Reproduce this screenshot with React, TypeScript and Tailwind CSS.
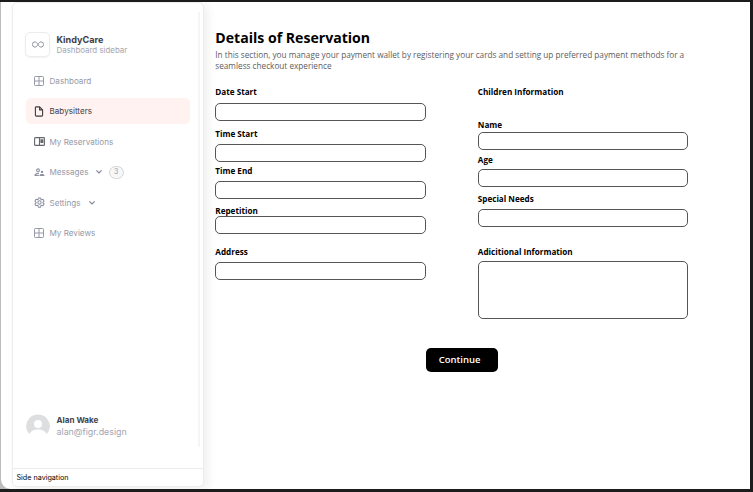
import type { ReactNode } from "react";

function Grid() {
  return (
    <svg className="h-[10px] w-[10px]" viewBox="0 0 10 10" fill="none" stroke="#9699a8" strokeWidth="1">
      <rect x="0.5" y="0.5" width="9" height="9" rx="0.8" />
      <path d="M5 .5v9M.5 5h9" />
    </svg>
  );
}

function FileIcon() {
  return (
    <svg className="h-[11px] w-[10px]" viewBox="0 0 10 11" fill="none" stroke="#3f3b3d" strokeWidth="1.1" strokeLinejoin="round">
      <path d="M2 .9h3.600L8.600 3.900v5.200a1 1 0 0 1-1 1H2.400a1 1 0 0 1-1-1V1.500q0-.6.6-.6Z" />
      <path d="M5.600 1v2.900h2.900" />
    </svg>
  );
}

function Reader() {
  return (
    <svg className="h-[9px] w-[11px]" viewBox="0 0 11 9" fill="none" stroke="#66676c" strokeWidth="1.1">
      <rect x="0.600" y="0.600" width="9.800" height="7.800" rx="0.700" />
      <path d="M5.500.600v7.800" />
      <path d="M6.400 2.300h3v3.600h-3z" fill="#66676c" stroke="none" />
    </svg>
  );
}

function People() {
  return (
    <svg className="h-[9px] w-[11px]" viewBox="0 0 11 9" fill="none" stroke="#8b8f9e" strokeWidth="1.100">
      <circle cx="4" cy="2.300" r="1.400" />
      <path d="M5 5.400C2.600 5 1 5.900 1 7.400h3.800" />
      <circle cx="8" cy="3.900" r="1.200" fill="#8b8f9e" stroke="none" />
      <path d="M5.400 8c0-1.500 1-2.100 2.600-2.100s2.600.6 2.600 2.100Z" fill="#8b8f9e" stroke="none" />
    </svg>
  );
}

function Gear() {
  return (
    <svg className="h-[11px] w-[11px]" viewBox="0 0 24 24" fill="none" stroke="#8b8f9e" strokeWidth="2.200" strokeLinejoin="round">
      <path d="M9.700 2h4.600l.6 3 1.900 1.100 2.900-1 2.300 4-2.300 2v2l2.300 2-2.300 4-2.900-1-1.900 1.100-.6 3H9.700l-.6-3-1.900-1.100-2.900 1-2.300-4 2.300-2v-2L2 9.100l2.300-4 2.900 1L9.100 5Z" />
      <circle cx="12" cy="12" r="3.600" />
    </svg>
  );
}

function Chevron() {
  return (
    <svg className="h-[4px] w-[6px]" viewBox="0 0 6 4" fill="none" stroke="#858998" strokeWidth="1.100" strokeLinecap="round" strokeLinejoin="round">
      <path d="M.700.700 3 3 5.300.700" />
    </svg>
  );
}

function NavItem({ icon, label, active, children }: { icon: ReactNode; label: string; active?: boolean; children?: ReactNode }) {
  return (
    <div className={`flex h-[26px] items-center rounded-[5px] pl-[7px] ${active ? "bg-[#fff2f0] text-[#454146]" : "text-[#9699a6]"}`}>
      <span className="flex w-[12px] justify-center">{icon}</span>
      <span className="ml-[4.500px] text-[8.100px] leading-[12px]">{label}</span>
      {children}
    </div>
  );
}

function Field({ label, className, box }: { label: string; className: string; box: string }) {
  return (
    <label className={`block ${className}`}>
      <span className="block h-[12px] text-[8.150px] leading-[12px] font-bold text-black">{label}</span>
      <span className={`block w-full rounded-[5px] border border-[#555] bg-white ${box}`} />
    </label>
  );
}

export default function App() {
  return (
    <div className="flex h-[492px] w-[753px] overflow-hidden border-t-2 border-r-[3px] border-b-[3px] border-[#1c1c1c] bg-[#bcbcbc] font-['Open_Sans','Noto_Sans',sans-serif]">
      <div className="flex h-[487px] w-full overflow-hidden rounded-bl-[10px] border-l border-[#bcbcbc] bg-white">
        <aside className="ml-[11px] flex h-[484.500px] w-[192px] shrink-0 flex-col rounded-[5px] border border-[#ececee] bg-white font-['Inter',sans-serif] shadow-[4px_3px_10px_rgba(70,60,40,0.08)]">
          <div className="mt-[9px] mr-[3px] flex h-[435px] flex-col border-r-2 border-[#f5f5f5] pt-[20px] pl-[13px]">
            <div className="flex items-center">
              <div className="-ml-px flex h-[25px] w-[25px] items-center justify-center rounded-[5px] border border-[#ececee] bg-white shadow-xs">
                <svg className="h-[7px] w-[12px]" viewBox="0 0 12 7" fill="none" stroke="#858895" strokeWidth="0.900">
                  <path d="M6 3.500C5 1.700 4.300.900 3 .900a2.600 2.600 0 0 0 0 5.200c1.300 0 2-.8 3-2.600s1.700-2.600 3-2.600a2.600 2.600 0 0 1 0 5.200c-1.300 0-2-.8-3-2.600Z" />
                </svg>
              </div>
              <div className="ml-[6.500px]">
                <div className="text-[9.100px] leading-[11px] font-bold text-[#3b3e4b]">KindyCare</div>
                <div className="text-[7.900px] leading-[10px] text-[#a3a6b2]">Dashboard sidebar</div>
              </div>
            </div>
            <nav className="mt-[11px] mr-[8px] flex flex-col gap-[4.400px]">
              <NavItem icon={<Grid />} label="Dashboard" />
              <NavItem icon={<FileIcon />} label="Babysitters" active />
              <NavItem icon={<Reader />} label="My Reservations" />
              <NavItem icon={<People />} label="Messages">
                <span className="ml-[7px]"><Chevron /></span>
                <span className="ml-[7px] flex h-[13px] w-[15px] items-center justify-center rounded-full border border-[#d4d5da] bg-[#f7f7f8] text-[7px]">3</span>
              </NavItem>
              <NavItem icon={<Gear />} label="Settings">
                <span className="ml-[8px]"><Chevron /></span>
              </NavItem>
              <NavItem icon={<Grid />} label="My Reviews" />
            </nav>
            <div className="mt-auto mb-[9.500px] flex items-center">
              <svg className="h-[24px] w-[24px]" viewBox="0 0 24 24">
                <path d="M12 .5A11.700 11.700 0 0 0 3.200 20C5 16.800 8 15.500 12 15.500s7 1.300 8.800 4.500A11.700 11.700 0 0 0 12 .5Z" fill="#dddee0" />
                <circle cx="12" cy="10" r="4" fill="white" />
              </svg>
              <div className="ml-[6.500px]">
                <div className="text-[8.100px] leading-[11px] font-bold text-[#42444e]">Alan Wake</div>
                <div className="text-[8.900px] leading-[11px] text-[#a3a6b2]">alan@figr.design</div>
              </div>
            </div>
          </div>
          <div className="mt-auto h-[18px] border-t border-[#ececee] pl-[3.500px] text-[7.200px] leading-[17px] text-black">Side navigation</div>
        </aside>
        <main className="ml-[11.300px] w-[480px] pt-[27px]">
          <h1 className="h-[18px] text-[14.100px] leading-[18px] font-bold text-black">Details of Reservation</h1>
          <p className="mt-[2px] h-[23px] text-[8.210px] leading-[11px] whitespace-nowrap text-[#5c5c5c]">
            In this section, you manage your payment wallet by registering your cards and setting up preferred payment methods for a
            <br />
            seamless checkout experience
          </p>
          <form className="mt-[14px] flex gap-[52px]">
            <div className="w-[210.500px]">
              <Field label="Date Start" className="" box="mt-[5px] h-[18px]" />
              <Field label="Time Start" className="mt-[7px]" box="mt-[3.500px] h-[18px]" />
              <Field label="Time End" className="mt-[3.500px]" box="mt-[4px] h-[18px]" />
              <Field label="Repetition" className="mt-[6px]" box="-mt-[1px] h-[18px]" />
              <Field label="Address" className="mt-[11.500px]" box="mt-[4.500px] h-[18px]" />
            </div>
            <div className="w-[210.500px]">
              <h2 className="h-[12px] text-[8.150px] leading-[12px] font-bold">Children Information</h2>
              <Field label="Name" className="mt-[21px]" box="mt-[1px] h-[18px]" />
              <Field label="Age" className="mt-[4px]" box="mt-[3px] h-[18px]" />
              <Field label="Special Needs" className="mt-[6px]" box="mt-[4px] h-[18px]" />
              <Field label="Adicitional Information" className="mt-[18.500px]" box="mt-[3.500px] h-[58px]" />
            </div>
          </form>
          <button className="mt-[28.500px] ml-[210.300px] block h-[24.500px] w-[72.500px] rounded-[5px] bg-black pr-[4.500px] text-[9.500px] leading-[22px] font-semibold text-white">Continue</button>
        </main>
      </div>
    </div>
  );
}
